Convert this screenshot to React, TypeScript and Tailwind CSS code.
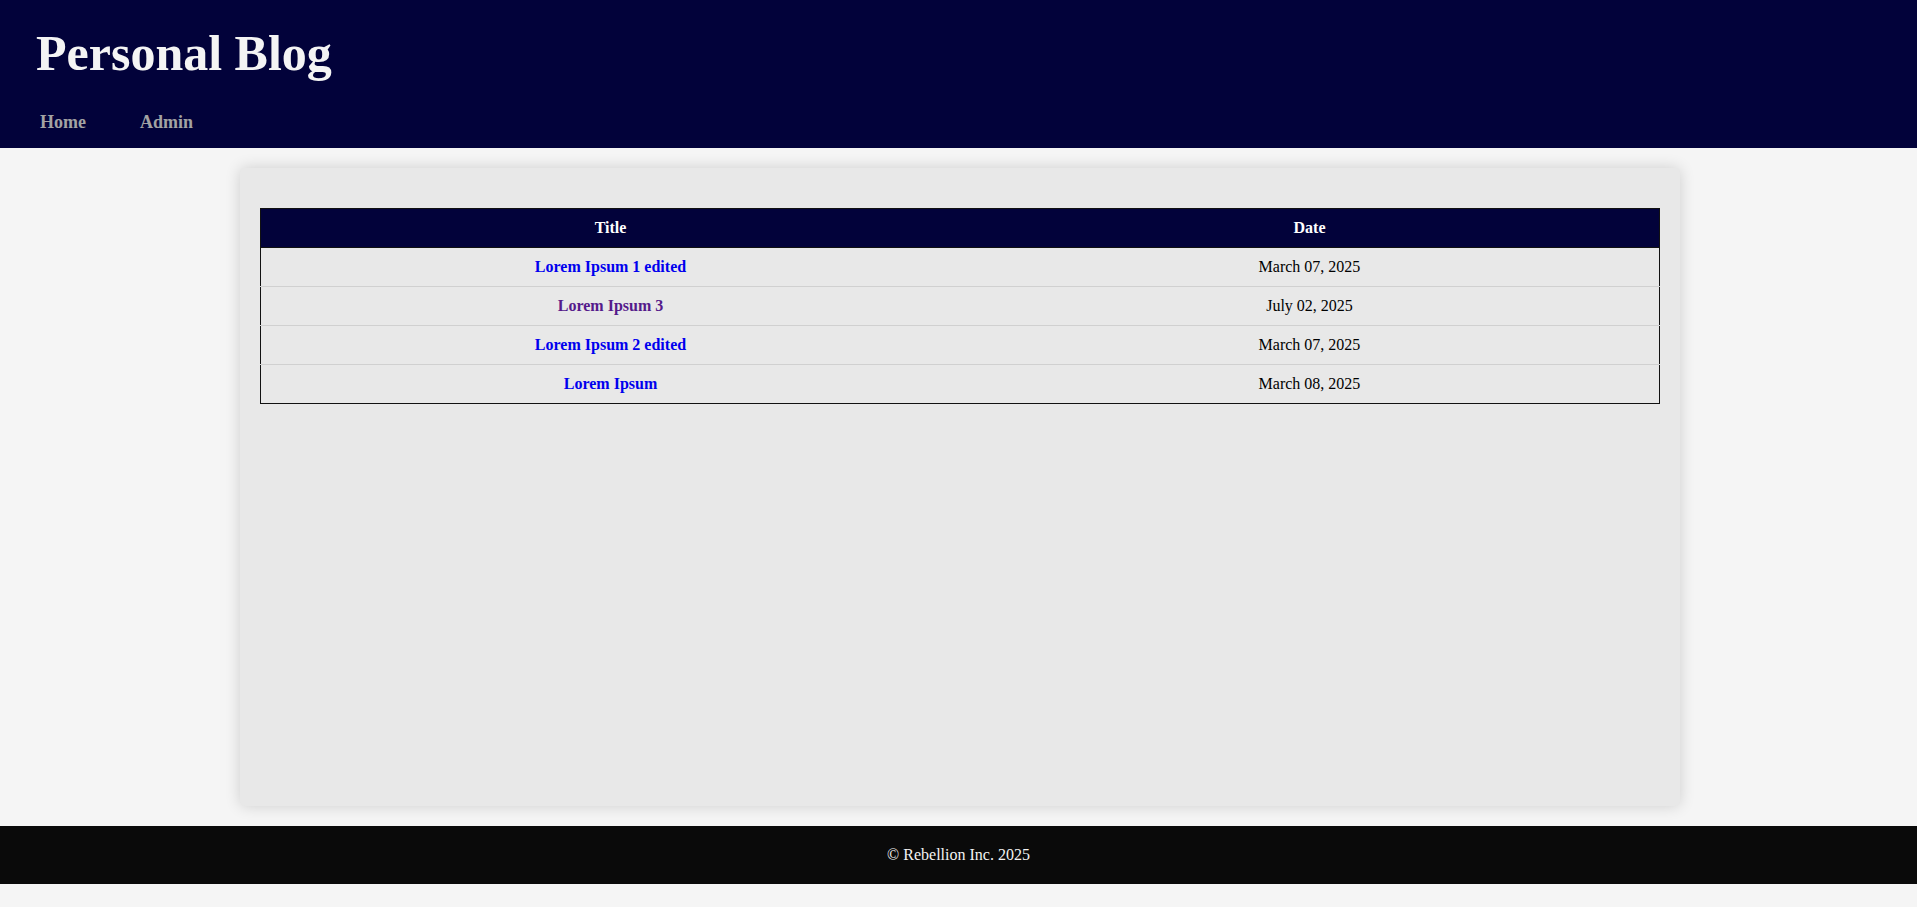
const posts = [
  { title: "Lorem Ipsum 1 edited", date: "March 07, 2025", visited: false },
  { title: "Lorem Ipsum 3", date: "July 02, 2025", visited: true },
  { title: "Lorem Ipsum 2 edited", date: "March 07, 2025", visited: false },
  { title: "Lorem Ipsum", date: "March 08, 2025", visited: false },
]

const App = () => {
  return (
    <div className="min-h-screen bg-[#f5f5f5] font-['Liberation_Serif','Times_New_Roman',serif] text-[16px] text-black">
      {/* Header */}
      <header className="h-[148px] bg-[#02023a] pl-[36px] pt-[25px]">
        <h1 className="m-0 text-[50px] font-bold leading-[57px] text-[#f4f4f4]">Personal Blog</h1>
        <nav className="mt-[30px] flex pl-[4px] text-[18px] font-bold leading-[21px] text-[#a3a3a3]">
          <a href="#" className="mr-[54px] no-underline">Home</a>
          <a href="#" className="no-underline">Admin</a>
        </nav>
      </header>

      {/* Main card */}
      <div className="flex justify-center py-5 pl-[3px]">
        <main className="h-[638px] w-[1440px] rounded-[5px] bg-[#e8e8e8] p-5 shadow-[0_0_15px_rgba(0,0,0,0.16)]">
          <table className="mt-5 w-full border-collapse border border-[#111]">
            <thead>
              <tr className="bg-[#02023a] text-white">
                <th className="w-1/2 border-b border-[#111] py-[10px] text-center font-bold leading-[18px]">Title</th>
                <th className="w-1/2 border-b border-[#111] py-[10px] text-center font-bold leading-[18px]">Date</th>
              </tr>
            </thead>
            <tbody>
              {posts.map((post, i) => (
                <tr key={i}>
                  <td
                    className={
                      i < posts.length - 1
                        ? "border-b border-[#d0d0d0] py-[10px] text-center leading-[18px]"
                        : "py-[10px] text-center leading-[18px]"
                    }
                  >
                    <a
                      href="#"
                      className={post.visited ? "font-bold text-[#551a8b] no-underline" : "font-bold text-[#0000ee] no-underline"}
                    >
                      {post.title}
                    </a>
                  </td>
                  <td
                    className={
                      i < posts.length - 1
                        ? "border-b border-[#d0d0d0] py-[10px] text-center leading-[18px]"
                        : "py-[10px] text-center leading-[18px]"
                    }
                  >
                    {post.date}
                  </td>
                </tr>
              ))}
            </tbody>
          </table>
        </main>
      </div>

      {/* Footer */}
      <footer className="bg-[#0a0a0a] py-5 text-center leading-[18px] text-[#f4f4f4]">
        © Rebellion Inc. 2025
      </footer>
    </div>
  )
}

export default App
